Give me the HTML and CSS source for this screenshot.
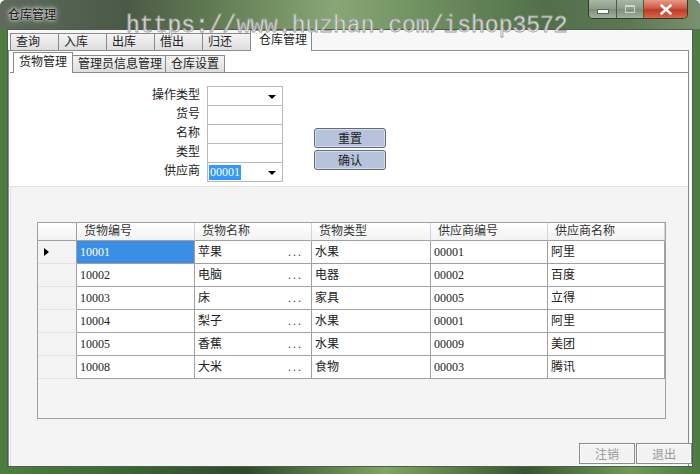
FILE: index.html
```html
<!DOCTYPE html>
<html lang="zh">
<head>
<meta charset="utf-8">
<title>仓库管理</title>
<link rel="stylesheet" href="styles.css">
</head>
<body>
<div class="window">
  <div class="titlebar">
    <span class="title">仓库管理</span>
    <div class="controls">
      <div class="ctl min"><span class="bar"></span></div>
      <div class="ctl max"><span class="box"></span></div>
      <div class="ctl close"><svg width="14" height="11" viewBox="0 0 14 11"><path d="M2.5 1.5 L11.5 9.5 M11.5 1.5 L2.5 9.5" stroke="#fff" stroke-width="2.6" stroke-linecap="round"/></svg></div>
    </div>
  </div>
  <div class="frame">
    <div class="client">
      <div class="tabs outer">
        <span class="tab">查询</span>
        <span class="tab">入库</span>
        <span class="tab">出库</span>
        <span class="tab">借出</span>
        <span class="tab">归还</span>
        <span class="tab active">仓库管理</span>
      </div>
      <div class="tabpage">
        <div class="tabs inner">
          <span class="itab active">货物管理</span>
          <span class="itab w93">管理员信息管理</span>
          <span class="itab w59">仓库设置</span>
        </div>
        <div class="innerpage">
          <div class="formpanel">
            <div class="fields">
              <span class="lbl">操作类型</span><div class="input combo"><span class="arrow"></span></div>
              <span class="lbl">货号</span><div class="input"></div>
              <span class="lbl">名称</span><div class="input"></div>
              <span class="lbl">类型</span><div class="input"></div>
              <span class="lbl">供应商</span><div class="input combo"><span class="sel">00001</span><span class="arrow"></span></div>
            </div>
            <div class="actions">
              <button class="btn">重置</button>
              <button class="btn">确认</button>
            </div>
          </div>
          <div class="gridpanel">
            <div class="grid">
              <div class="hc corner"></div>
              <div class="hc">货物编号</div>
              <div class="hc">货物名称</div>
              <div class="hc">货物类型</div>
              <div class="hc">供应商编号</div>
              <div class="hc">供应商名称</div>

              <div class="rh"><span class="tri"></span></div>
              <div class="dc selected">10001</div>
              <div class="dc split"><span>苹果</span><span class="dots">...</span></div>
              <div class="dc">水果</div>
              <div class="dc">00001</div>
              <div class="dc">阿里</div>

              <div class="rh"></div>
              <div class="dc">10002</div>
              <div class="dc split"><span>电脑</span><span class="dots">...</span></div>
              <div class="dc">电器</div>
              <div class="dc">00002</div>
              <div class="dc">百度</div>

              <div class="rh"></div>
              <div class="dc">10003</div>
              <div class="dc split"><span>床</span><span class="dots">...</span></div>
              <div class="dc">家具</div>
              <div class="dc">00005</div>
              <div class="dc">立得</div>

              <div class="rh"></div>
              <div class="dc">10004</div>
              <div class="dc split"><span>梨子</span><span class="dots">...</span></div>
              <div class="dc">水果</div>
              <div class="dc">00001</div>
              <div class="dc">阿里</div>

              <div class="rh"></div>
              <div class="dc">10005</div>
              <div class="dc split"><span>香蕉</span><span class="dots">...</span></div>
              <div class="dc">水果</div>
              <div class="dc">00009</div>
              <div class="dc">美团</div>

              <div class="rh"></div>
              <div class="dc">10008</div>
              <div class="dc split"><span>大米</span><span class="dots">...</span></div>
              <div class="dc">食物</div>
              <div class="dc">00003</div>
              <div class="dc">腾讯</div>
            </div>
            <div class="footer">
              <button class="fbtn">注销</button>
              <button class="fbtn">退出</button>
            </div>
          </div>
        </div>
      </div>
    </div>
  </div>
  <div class="watermark">https://www.huzhan.com/ishop3572</div>
</div>
</body>
</html>
```
FILE: styles.css
```css
* { box-sizing: border-box; margin: 0; padding: 0; }
html, body { width: 700px; height: 474px; overflow: hidden; }
body {
  font-family: "Liberation Serif", "Noto Sans CJK SC", serif;
  font-size: 12px;
  color: #222;
  background: #fff;
}
.window {
  position: relative;
  width: 700px;
  height: 474px;
  display: flex;
  flex-direction: column;
  background: linear-gradient(90deg, #4d7e40 0%, #3e6a35 15%, #2c4a2a 35%, #7ea664 55%, #35552f 75%, #6f9a58 90%, #4c7a40 100%);
  border-radius: 6px 6px 0 0;
  overflow: hidden;
}
.titlebar {
  height: 29px;
  display: flex;
  justify-content: space-between;
  align-items: flex-start;
  background: linear-gradient(90deg, #5d6a5c 0%, #4a5a46 18%, #647f55 32%, #88a776 48%, #6c8d5d 62%, #51704a 78%, #5c7853 90%, #7b9070 100%);
}
.title {
  margin: 8px 0 0 8px;
  font-size: 12px;
  line-height: 14px;
  color: #111;
  text-shadow: 0 0 6px #fff, 0 0 3px #fff;
}
.controls {
  display: flex;
  margin-right: 12px;
  border: 1px solid #2f3b2e;
  border-top: none;
  border-radius: 0 0 5px 5px;
  overflow: hidden;
  height: 19px;
}
.ctl {
  height: 18px;
  display: flex;
  align-items: center;
  justify-content: center;
}
.min, .max {
  width: 28px;
  background: linear-gradient(#a9b7a6, #8c9d89 50%, #7d8f79 51%, #9fb29a);
  border-right: 1px solid #4b5a49;
}
.max { width: 27px; }
.min .bar {
  width: 10px;
  height: 3px;
  margin-top: 5px;
  background: #fff;
  border: 1px solid #56645a;
  box-sizing: content-box;
}
.max .box {
  width: 10px;
  height: 8px;
  border: 1px solid #dfe6de;
  border-top-width: 2px;
  opacity: 0.8;
}
.close {
  width: 43px;
  background: linear-gradient(#e49a88, #d05b45 45%, #c03a25 55%, #d9664c);
}
.frame {
  flex: 1;
  display: flex;
  padding: 0 7px 7px 7px;
}
.client {
  flex: 1;
  display: flex;
  flex-direction: column;
  background: #f7f7f7;
  border: 1px solid #4f5d4c;
}
.tabs { display: flex; align-items: flex-end; }
.outer { height: 20px; padding-left: 2px; }
.tab {
  width: 48px;
  height: 17px;
  padding-left: 5px;
  line-height: 16px;
  border: 1px solid #8a8a8a;
  border-bottom: none;
  border-right: none;
  background: linear-gradient(#f4f4f4, #dedede);
  color: #222;
}
.tab.active {
  width: 62px;
  height: 21px;
  margin-bottom: -1px;
  padding-left: 8px;
  line-height: 18px;
  background: #fff;
  border-right: 1px solid #8a8a8a;
  position: relative;
  z-index: 1;
}
.tabpage {
  flex: 1;
  display: flex;
  flex-direction: column;
  background: #fff;
  border: 1px solid #8c8c8c;
  border-bottom: none;
  margin-right: 3px;
}
.inner { height: 21px; padding-left: 4px; }
.itab {
  width: 60px;
  height: 17px;
  padding-left: 5px;
  line-height: 16px;
  border: 1px solid #8a8a8a;
  border-bottom: none;
  border-left: none;
  background: linear-gradient(#f4f4f4, #dedede);
}
.itab.active {
  height: 21px;
  margin-bottom: -1px;
  line-height: 19px;
  background: #fff;
  border-left: 1px solid #8a8a8a;
  position: relative;
  z-index: 1;
}
.itab.w93 { width: 93px; }
.itab.w59 { width: 59px; }
.innerpage {
  flex: 1;
  display: flex;
  flex-direction: column;
  border-top: 1px solid #8c8c8c;
  margin-left: 1px;
}
.formpanel {
  height: 113px;
  display: flex;
  align-items: flex-start;
  padding-top: 13px;
  background: #fff;
}
.fields {
  display: grid;
  grid-template-columns: 60px 76px;
  grid-auto-rows: 19px;
  column-gap: 7px;
  margin-left: 130px;
}
.lbl {
  text-align: right;
  line-height: 19px;
  color: #222;
}
.input {
  height: 20px;
  border: 1px solid #b8b8b8;
  background: #fff;
  position: relative;
  display: flex;
  align-items: center;
}
.combo .arrow {
  position: absolute;
  right: 6px;
  top: 8px;
  width: 0;
  height: 0;
  border-left: 4px solid transparent;
  border-right: 4px solid transparent;
  border-top: 4px solid #000;
}
.sel {
  margin-left: 1px;
  padding: 0 1px;
  background: #3399ff;
  color: #fff;
  line-height: 15px;
}
.actions {
  display: flex;
  flex-direction: column;
  gap: 2px;
  margin: 42px 0 0 31px;
}
.btn {
  width: 72px;
  height: 20px;
  font: inherit;
  color: #222;
  background: #b7c3da;
  border: 1px solid #616a78;
  border-radius: 3px;
  box-shadow: inset 0 0 0 1px #d6deec;
}
.gridpanel {
  flex: 1;
  display: flex;
  flex-direction: column;
  background: #f4f4f4;
  border-top: 1px solid #e2e2e2;
  border-left: 1px solid #dcdcdc;
}
.grid {
  width: 629px;
  height: 197px;
  margin: 35px 0 0 26px;
  border: 1px solid #a0a0a0;
  background: #f4f4f4;
  display: grid;
  grid-template-columns: 39px 118px 117px 119px 117px 117px;
  grid-template-rows: 18px repeat(6, 23px);
  align-content: start;
}
.hc {
  background: linear-gradient(#ffffff, #f2f2f2);
  border-right: 1px solid #d4d4d4;
  border-bottom: 1px solid #a0a0a0;
  padding-left: 7px;
  line-height: 17px;
  color: #333;
}
.hc.corner { border-right: 1px solid #a0a0a0; }
.rh {
  background: #f3f3f3;
  border-right: 1px solid #a0a0a0;
  border-bottom: 1px solid #e2e2e2;
  display: flex;
  align-items: center;
  padding-left: 6px;
}
.tri {
  width: 0;
  height: 0;
  border-left: 5px solid #000;
  border-top: 4px solid transparent;
  border-bottom: 4px solid transparent;
}
.dc {
  background: #fff;
  border-right: 1px solid #a0a0a0;
  border-bottom: 1px solid #a0a0a0;
  padding-left: 3px;
  line-height: 22px;
  color: #222;
  white-space: nowrap;
}
.dc.selected { background: #3a8ee6; color: #fff; }
.dc.split {
  display: flex;
  justify-content: space-between;
  padding-right: 8px;
}
.dots { letter-spacing: 2px; color: #444; }
.footer {
  margin-top: auto;
  margin-right: -4px;
  margin-bottom: 2px;
  display: flex;
  justify-content: flex-end;
  gap: 1px;
}
.fbtn {
  width: 56px;
  height: 21px;
  font: inherit;
  color: #9a9a9a;
  background: #f2f2f2;
  border: 1px solid #8a8a8a;
  box-shadow: inset 0 0 0 1px #fbfbfb;
}
.watermark {
  position: absolute;
  left: 126px;
  top: 14px;
  font-family: "Liberation Mono", monospace;
  font-size: 23px;
  line-height: 24px;
  color: rgba(252, 252, 252, 0.85);
  -webkit-text-stroke: 0.8px #9c9c9c;
  pointer-events: none;
  z-index: 5;
}
```
